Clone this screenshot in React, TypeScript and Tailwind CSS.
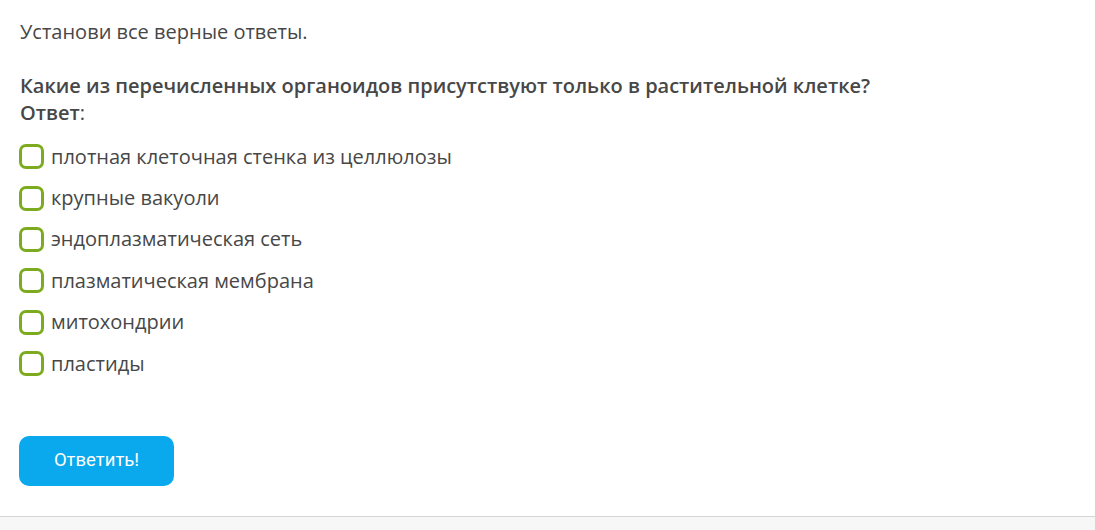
const options = [
  "плотная клеточная стенка из целлюлозы",
  "крупные вакуоли",
  "эндоплазматическая сеть",
  "плазматическая мембрана",
  "митохондрии",
  "пластиды",
];

export default function App() {
  return (
    <div className="flex h-[530px] w-[1095px] flex-col bg-white font-['Open_Sans',sans-serif] text-[#474747]">
      <div className="flex-1 px-[20px] pt-[19px]">
        <p className="text-[20px] leading-[26px]">Установи все верные ответы.</p>
        <p className="mt-[27px] text-[20px] font-semibold leading-[27px]">
          Какие из перечисленных органоидов присутствуют только в растительной клетке?
          <br />
          Ответ<span className="font-normal">:</span>
        </p>
        <div className="mt-[10px] flex flex-col">
          {options.map((o) => (
            <label key={o} className="flex h-[41.4px] items-center gap-[7px]">
              <span className="ml-[-1px] h-[25px] w-[25px] rounded-[7px] border-[3px] border-[#7cab1f] bg-white" />
              <span className="text-[20px] leading-[26px]">{o}</span>
            </label>
          ))}
        </div>
        <button className="mt-[52px] ml-[-1px] h-[50px] w-[155px] rounded-[10px] bg-[#0aa8ec] font-['Roboto',sans-serif] text-[18.5px] text-white">
          Ответить!
        </button>
      </div>
      <div className="h-[14px] border-t border-[#d4d4d4] bg-[#f7f7f7]" />
    </div>
  );
}
